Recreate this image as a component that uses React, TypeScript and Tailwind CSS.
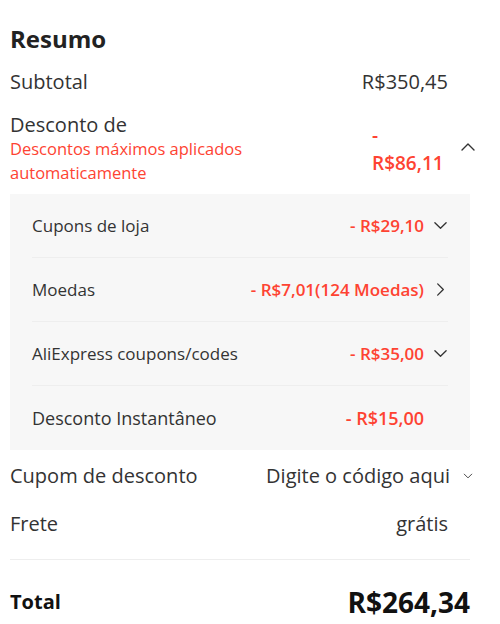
import React from 'react';

const red = 'text-[#fe4332]';

const ChevronDown = ({ className = '' }: { className?: string }) => (
  <svg viewBox="0 0 16 16" className={className} fill="none" stroke="currentColor" strokeWidth={1.4} strokeLinecap="round" strokeLinejoin="round">
    <path d="M2 5l6 6 6-6" />
  </svg>
);

const ChevronUp = ({ className = '' }: { className?: string }) => (
  <svg viewBox="0 0 16 16" className={className} fill="none" stroke="currentColor" strokeWidth={1.4} strokeLinecap="round" strokeLinejoin="round">
    <path d="M2 11l6-6 6 6" />
  </svg>
);

const ChevronRight = ({ className = '' }: { className?: string }) => (
  <svg viewBox="0 0 16 16" className={className} fill="none" stroke="currentColor" strokeWidth={1.4} strokeLinecap="round" strokeLinejoin="round">
    <path d="M5 2l6 6-6 6" />
  </svg>
);

type Item = { label: string; value: string; icon?: 'down' | 'right'; big?: boolean };

const items: Item[] = [
  { label: 'Cupons de loja', value: '- R$29,10', icon: 'down' },
  { label: 'Moedas', value: '- R$7,01(124 Moedas)', icon: 'right' },
  { label: 'AliExpress coupons/codes', value: '- R$35,00', icon: 'down' },
  { label: 'Desconto Instantâneo', value: '- R$15,00', big: true },
];

export default function App() {
  return (
    <div className="w-[500px] bg-white px-[10px] pt-[20px] text-[#333]" style={{ fontFamily: '"Open Sans", sans-serif' }}>
      <h2 className="h-[38px] text-[24px] font-bold leading-[38px] text-[#222]">Resumo</h2>

      <div className="mt-[2px] flex h-[44px] w-[460px] items-center justify-between pr-[22px] text-[20px]">
        <span>Subtotal</span>
        <span>R$350,45</span>
      </div>

      <div className="flex w-[460px] pt-[9px] pb-[9px]">
        <div className="flex-1">
          <div className="text-[20px] leading-[24px]">Desconto de</div>
          <div className={`w-[260px] text-[16.5px] leading-[24px] ${red}`}>
            Descontos máximos aplicados automaticamente
          </div>
        </div>
        <div className={`mt-[8px] w-[78px] text-[19px] font-semibold leading-[28px] ${red}`}>- R$86,11</div>
        <div className="flex w-[20px] items-center justify-end pt-[10px] pb-[14px] text-[#333]">
          <ChevronUp className="mr-[-6px] h-[16px] w-[16px]" />
        </div>
      </div>

      <div className="w-[460px] bg-[#f7f7f7] px-[22px]">
        {items.map((it, i) => (
          <div
            key={it.label}
            className={`flex h-[64px] items-center ${i < items.length - 1 ? 'border-b border-[#eeeeee]' : ''}`}
          >
            <span className={`flex-1 ${it.big ? 'text-[18px]' : 'text-[17px]'}`}>{it.label}</span>
            <span className={`font-semibold ${red} ${it.big ? 'text-[18px]' : 'text-[17px]'}`}>{it.value}</span>
            <span className="flex w-[24px] justify-end text-[#333]">
              {it.icon === 'down' && <ChevronDown className="h-[15px] w-[15px]" />}
              {it.icon === 'right' && <ChevronRight className="h-[15px] w-[15px]" />}
            </span>
          </div>
        ))}
      </div>

      <div className="flex h-[51px] w-[460px] items-center justify-between text-[20px]">
        <span>Cupom de desconto</span>
        <span className="flex items-center">
          Digite o código aqui
          <ChevronDown className="ml-[13px] mr-[-3px] h-[10px] w-[10px]" />
        </span>
      </div>

      <div className="flex h-[46px] w-[460px] items-center justify-between pr-[22px] text-[20px]">
        <span>Frete</span>
        <span>grátis</span>
      </div>

      <div className="mt-[12px] h-px w-[460px] bg-[#eeeeee]" />

      <div className="flex h-[84px] w-[460px] items-center justify-between text-[#111]">
        <span className="text-[20px] font-bold">Total</span>
        <span className="text-[28px] font-bold">R$264,34</span>
      </div>
    </div>
  );
}
